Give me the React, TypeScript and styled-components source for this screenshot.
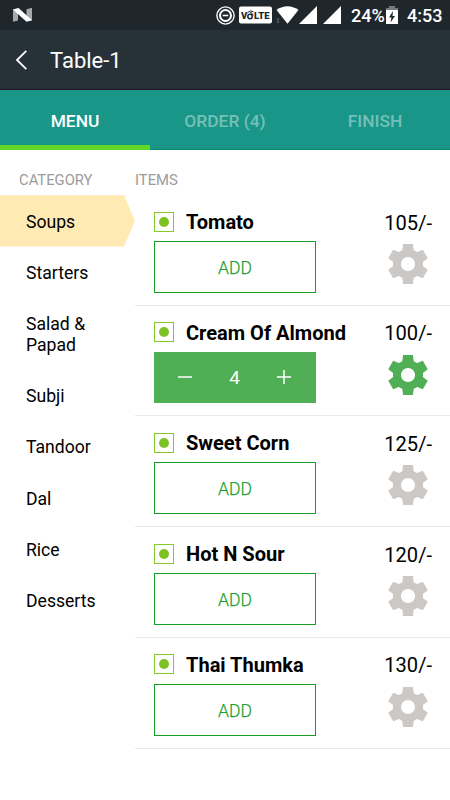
import React from 'react';
import styled, { createGlobalStyle } from 'styled-components';

const GlobalStyle = createGlobalStyle`
  * { box-sizing: border-box; }
  body { margin: 0; background: #fff; font-family: Roboto, sans-serif; }
`;

const Screen = styled.div`
  width: 450px;
  height: 800px;
  overflow: hidden;
  background: #fff;
  color: #000;
`;

const StatusBar = styled.header`
  height: 30px;
  background: #1f272d;
  display: flex;
  align-items: center;
  justify-content: space-between;
  padding: 0 8px 0 13px;
`;

const StatusGroup = styled.div`
  display: flex;
  align-items: center;
`;

const StatusText = styled.span<{ $width: number; $gap: number }>`
  width: ${p => p.$width}px;
  margin-left: ${p => p.$gap}px;
  font-size: 18px;
  font-weight: 500;
  line-height: 30px;
  padding-top: 1px;
  color: #fff;
  white-space: nowrap;
`;

const StatusIcon = styled.svg<{ $gap?: number }>`
  display: block;
  flex: none;
  margin-left: ${p => p.$gap ?? 0}px;
`;

const TitleBar = styled.div`
  height: 60px;
  background: #273238;
  border-bottom: 1px solid #24152b;
  display: flex;
  align-items: center;
  padding-left: 15px;
  gap: 21px;
`;

const BackButton = styled.button`
  border: 0;
  padding: 0;
  background: none;
  width: 14px;
  height: 22px;
  display: block;
`;

const Title = styled.h1`
  margin: 0;
  padding-top: 3px;
  font-size: 22px;
  font-weight: 400;
  line-height: 28px;
  color: #fff;
`;

const Tabs = styled.nav`
  height: 60px;
  display: grid;
  grid-template-columns: repeat(3, 1fr);
  background: #199688;
`;

const Tab = styled.button<{ $active?: boolean }>`
  border: 0;
  border-bottom: ${p => (p.$active ? '5px solid #60d826' : '1px solid #078777')};
  padding: ${p => (p.$active ? '7px' : '3px')} 0 0;
  background: none;
  color: ${p => (p.$active ? '#fff' : '#75c0b8')};
  font: 500 17.4px Roboto, sans-serif;
`;

const Content = styled.main`
  display: grid;
  grid-template-columns: 135px 1fr;
`;

const SectionLabel = styled.h2<{ $indent: number }>`
  margin: 0;
  height: 45.3px;
  padding: 20px 0 0 ${p => p.$indent}px;
  font-size: 14.8px;
  line-height: 20px;
  font-weight: 400;
  color: #9b9b9b;
`;

const Category = styled.div<{ $active?: boolean }>`
  padding: 16.5px 40px 14.3px 26px;
  font-size: 17.6px;
  line-height: 20.45px;
  background: ${p => (p.$active ? '#ffeab3' : 'none')};
  clip-path: ${p => (p.$active ? 'polygon(0 0, 124px 0, 100% 50%, 124px 100%, 0 100%)' : 'none')};
`;

const ItemList = styled.div`
  margin-top: -0.2px;
`;

const Item = styled.article`
  height: 110.7px;
  border-bottom: 1px solid #e9e9e9;
  padding: 15px 18px 0 19px;
  display: flex;
  justify-content: space-between;
`;

const ItemMain = styled.div`
  width: 200px;
`;

const NameRow = styled.div`
  display: flex;
  align-items: center;
  gap: 12px;
  height: 23px;
`;

const VegMark = styled.span`
  width: 20px;
  height: 20px;
  border: 1px solid #86c92b;
  display: grid;
  place-items: center;
  flex: none;

  &::after {
    content: '';
    width: 10px;
    height: 10px;
    border-radius: 50%;
    background: #7dc225;
  }
`;

const Name = styled.h3`
  margin: 0;
  padding-top: 1px;
  font-size: 20.05px;
  font-weight: 700;
  line-height: 24px;
  white-space: nowrap;
`;

const AddButton = styled.button`
  display: block;
  width: 162px;
  height: 52px;
  margin-top: 8px;
  border: 1px solid #159f25;
  padding: 2px 0 0;
  background: #fff;
  color: #1b9f2d;
  font: 300 17.5px Roboto, sans-serif;
  -webkit-text-stroke: 0.25px #1b9f2d;
`;

const Stepper = styled.div`
  width: 162px;
  height: 51px;
  margin-top: 8px;
  background: #50af55;
  color: #fff;
  display: flex;
  align-items: center;
  justify-content: space-between;
  padding: 0 24px 0 23px;
`;

const StepButton = styled.button`
  border: 0;
  padding: 0;
  background: none;
  width: 16px;
  height: 16px;
`;

const Quantity = styled.span`
  padding-top: 2px;
  font-size: 19px;
  line-height: 22px;
`;

const ItemSide = styled.div`
  display: flex;
  flex-direction: column;
  align-items: flex-end;
`;

const Price = styled.span`
  padding-top: 0.5px;
  font-size: 20.1px;
  line-height: 24px;
`;

const GearButton = styled.button<{ $active?: boolean }>`
  border: 0;
  padding: 0;
  background: none;
  width: 48px;
  height: 48px;
  margin-top: 5.3px;
  color: ${p => (p.$active ? '#50af55' : '#cbc8c6')};
`;

const Icon = styled.svg`
  display: block;
`;

const categories = ['Soups', 'Starters', 'Salad & Papad', 'Subji', 'Tandoor', 'Dal', 'Rice', 'Desserts'];

const items = [
  { name: 'Tomato', price: 105, quantity: 0 },
  { name: 'Cream Of Almond', price: 100, quantity: 4 },
  { name: 'Sweet Corn', price: 125, quantity: 0 },
  { name: 'Hot N Sour', price: 120, quantity: 0 },
  { name: 'Thai Thumka', price: 130, quantity: 0 },
];

const GearIcon = () => (
  <Icon width="48" height="48" viewBox="0 0 24 24" fill="currentColor" fillRule="evenodd">
    <path d="M9.55 2h4.9l.42 3.07c.61.25 1.17.59 1.69.98l2.88-1.16 2.43 4.2-2.43 1.93c.1.65.1 1.31 0 1.96l2.43 1.93-2.43 4.2-2.88-1.16c-.52.39-1.08.73-1.69.98L14.45 22h-4.9l-.42-3.07c-.61-.25-1.17-.59-1.69-.98L4.56 19.11 2.13 14.91l2.43-1.93c-.1-.65-.1-1.31 0-1.96L2.13 9.09l2.43-4.2 2.88 1.16c.52-.39 1.08-.73 1.69-.98zM8.45 12a3.55 3.55 0 1 0 7.1 0 3.55 3.55 0 1 0-7.1 0z" />
  </Icon>
);

const SignalIcon = ({ gap }: { gap: number }) => (
  <StatusIcon $gap={gap} width="18" height="18" viewBox="0 0 18 18">
    <path d="M18 0V18H0z" fill="#fff" />
  </StatusIcon>
);

const StatusIcons = () => (
  <StatusGroup>
    <StatusIcon width="19" height="19" viewBox="0 0 19 19" fill="none" stroke="#fff">
      <circle cx="9.5" cy="9.5" r="8.6" strokeWidth="1.4" />
      <circle cx="9.5" cy="9.5" r="5.5" strokeWidth="2" />
      <path d="M6.7 9.5h5.6" strokeWidth="1.6" />
    </StatusIcon>
    <StatusIcon $gap={4} width="33" height="18" viewBox="0 0 33 18">
      <rect width="33" height="17" y=".5" rx="2" fill="#fff" />
      <text x="2" y="13" fontFamily="Roboto" fontWeight="900" fontSize="9.5" fill="#1f272d">V</text>
      <text x="15" y="13" fontFamily="Roboto" fontWeight="900" fontSize="9.5" fill="#1f272d" textLength="15.5" lengthAdjust="spacingAndGlyphs">LTE</text>
      <g fill="none" stroke="#1f272d">
        <circle cx="11" cy="10.5" r="2.2" strokeWidth="1.5" />
        <path d="M8.5 6.7Q11 3.5 14.5 5.8M11 6.4q2.5.2 3.2 3" strokeWidth="1" />
      </g>
    </StatusIcon>
    <StatusIcon $gap={4} width="23" height="18" viewBox="0 0 23 18">
      <path d="M.5 4Q11.500-3.500 22.500 4L11.500 17.800z" fill="#fff" />
      <path d="M2 12.500v4M.9 13.800 2 12.500l1.100 1.300M.9 15.700 2 17l1.100-1.300" fill="none" stroke="#5b6267" />
    </StatusIcon>
    <SignalIcon gap={0} />
    <SignalIcon gap={6} />
    <StatusText $width={33} $gap={10}>24%</StatusText>
    <StatusIcon $gap={2} width="12" height="19" viewBox="0 0 12 19">
      <path d="M3 0h6v2h3v3H0V2h3z" fill="#737a7e" />
      <path d="M0 4h12v14H0z" fill="#fff" />
      <path d="M7 5 3 11.500h2.500L4.500 16.500 9 10H6.500z" fill="#1f272d" />
    </StatusIcon>
    <StatusText $width={35} $gap={9}>4:53</StatusText>
  </StatusGroup>
);

const App = () => (
  <Screen>
    <GlobalStyle />
    <StatusBar>
      <StatusIcon width="19" height="16" viewBox="0 0 19 16">
        <path d="M0 2.500 5 1.500v12L0 14.800zM19 13.300V.8l-5.500 1.500v12z" fill="#a5a9ab" />
        <path d="M0 2.400 5.500 1 19 13.300l-5.500 1.400z" fill="#fff" />
      </StatusIcon>
      <StatusIcons />
    </StatusBar>
    <TitleBar>
      <BackButton aria-label="Back">
        <Icon width="14" height="22" viewBox="0 0 14 22" fill="none" stroke="#fff" strokeWidth="1.800">
          <path d="M11.300 1.800 2 11l9.300 9.200" />
        </Icon>
      </BackButton>
      <Title>Table-1</Title>
    </TitleBar>
    <Tabs>
      <Tab $active>MENU</Tab>
      <Tab>ORDER (4)</Tab>
      <Tab>FINISH</Tab>
    </Tabs>
    <Content>
      <aside>
        <SectionLabel $indent={19}>CATEGORY</SectionLabel>
        {categories.map((name, i) => (
          <Category key={name} $active={i === 0}>{name}</Category>
        ))}
      </aside>
      <section>
        <SectionLabel $indent={0}>ITEMS</SectionLabel>
        <ItemList>
          {items.map(({ name, price, quantity }) => (
            <Item key={name}>
              <ItemMain>
                <NameRow>
                  <VegMark />
                  <Name>{name}</Name>
                </NameRow>
                {quantity > 0 ? (
                  <Stepper>
                    <StepButton aria-label="Remove one">
                      <Icon width="16" height="16" stroke="#fff" strokeWidth="1.500"><path d="M1 8h14" /></Icon>
                    </StepButton>
                    <Quantity>{quantity}</Quantity>
                    <StepButton aria-label="Add one">
                      <Icon width="16" height="16" stroke="#fff" strokeWidth="1.500"><path d="M1 8h14M8 1v14" /></Icon>
                    </StepButton>
                  </Stepper>
                ) : (
                  <AddButton>ADD</AddButton>
                )}
              </ItemMain>
              <ItemSide>
                <Price>{price}/-</Price>
                <GearButton $active={quantity > 0} aria-label="Customize"><GearIcon /></GearButton>
              </ItemSide>
            </Item>
          ))}
        </ItemList>
      </section>
    </Content>
  </Screen>
);

export default App;
